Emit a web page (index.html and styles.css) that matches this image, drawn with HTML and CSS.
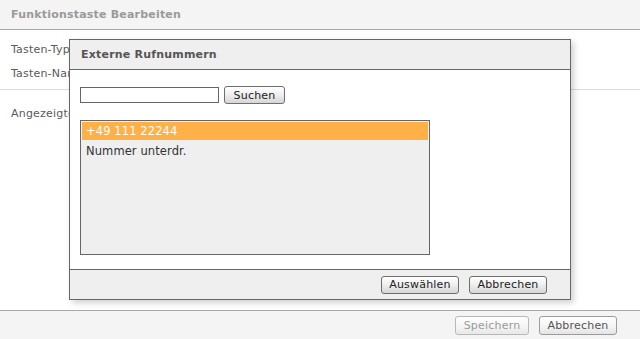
FILE: index.html
```html
<!DOCTYPE html>
<html lang="de">
<head>
<meta charset="utf-8">
<title>Funktionstaste Bearbeiten</title>
<link rel="stylesheet" href="styles.css">
</head>
<body>
<div class="page">
  <header class="page-head">Funktionstaste Bearbeiten</header>
  <main class="page-main">
    <section class="fields">
      <div class="row first">Tasten-Typ</div>
      <div class="row">Tasten-Name</div>
    </section>
    <section class="fields second">
      <div class="row">Angezeigter Name</div>
    </section>
  </main>
  <footer class="page-foot">
    <button class="btn btn-save" disabled>Speichern</button>
    <button class="btn btn-cancel">Abbrechen</button>
  </footer>
</div>

<div class="dialog">
  <div class="dlg-head">Externe Rufnummern</div>
  <div class="dlg-body">
    <div class="search">
      <input class="search-input" type="text">
      <button class="btn btn-search">Suchen</button>
    </div>
    <div class="listbox">
      <div class="opt selected">+49 111 22244</div>
      <div class="opt">Nummer unterdr.</div>
    </div>
  </div>
  <div class="dlg-foot">
    <button class="btn btn-w78">Auswählen</button>
    <button class="btn btn-w78">Abbrechen</button>
  </div>
</div>
</body>
</html>
```
FILE: styles.css
```css
html, body {
  margin: 0;
  padding: 0;
  height: 100%;
}
body {
  font-family: "DejaVu Sans", Verdana, sans-serif;
  font-size: 11px;
  letter-spacing: 0.2px;
  color: #5a5a5a;
  background: #fff;
  overflow: hidden;
}
.page {
  display: flex;
  flex-direction: column;
  height: 339px;
}
.page-head {
  height: 29px;
  line-height: 29px;
  background: #f4f4f4;
  border-bottom: 1px solid #a8a8a8;
  color: #9a9a9a;
  font-weight: bold;
  padding-left: 11px;
}
.page-main {
  flex: 1;
}
.fields {
  padding: 9px 11px 4px;
  border-bottom: 1px solid #dcdcdc;
}
.fields.second {
  border-bottom: none;
  padding-top: 13px;
}
.row {
  line-height: 22px;
  height: 22px;
  white-space: nowrap;
}
.row.first {
  height: 24px;
}
.page-foot {
  height: 28px;
  background: #f4f4f4;
  border-top: 1px solid #a8a8a8;
  display: flex;
  justify-content: flex-end;
  align-items: center;
  gap: 10px;
  padding-right: 23px;
}
.page-foot .btn {
  height: 19px;
}
.btn-save {
  width: 74px;
}
.btn-cancel {
  width: 78px;
}
.btn {
  font-family: "DejaVu Sans", Verdana, sans-serif;
  font-size: 11px;
  letter-spacing: 0.2px;
  color: #222;
  height: 18px;
  padding: 0 6px;
  border: 1px solid #6e6e6e;
  border-radius: 3px;
  background: linear-gradient(#ffffff, #f0f0f0 45%, #d6d6d6);
  box-sizing: border-box;
  line-height: 15px;
  margin: 0;
}
.page-foot .btn-cancel {
  color: #555;
  border-color: #9c9c9c;
  background: linear-gradient(#ffffff, #f6f6f6 50%, #e4e4e4);
}
.btn:disabled {
  color: #9a9a9a;
  border-color: #b8b8b8;
  background: linear-gradient(#ffffff, #f6f6f6 50%, #e8e8e8);
}
.btn-w78 {
  width: 78px;
}
.dialog {
  position: absolute;
  left: 69px;
  top: 39px;
  width: 502px;
  box-sizing: border-box;
  border: 1px solid #666;
  background: #fff;
  box-shadow: 3px 3px 6px rgba(0, 0, 0, 0.18);
}
.dlg-head {
  height: 29px;
  line-height: 29px;
  background: #efefef;
  border-bottom: 1px solid #666;
  padding-left: 11px;
  font-weight: bold;
  color: #555;
}
.dlg-body {
  height: 200px;
  box-sizing: border-box;
  padding: 15px 10px 0;
  border-bottom: 1px solid #666;
}
.search {
  display: flex;
  align-items: center;
  gap: 5px;
  height: 20px;
}
.search-input {
  width: 139px;
  height: 16px;
  box-sizing: border-box;
  border: 1px solid #666;
  padding: 0 2px;
  margin: 0;
  font-family: "DejaVu Sans", Verdana, sans-serif;
  font-size: 11px;
}
.btn-search {
  width: 61px;
}
.listbox {
  margin-top: 15px;
  width: 350px;
  height: 135px;
  box-sizing: border-box;
  border: 1px solid #666;
  background: #efefef;
  padding: 1px;
}
.opt {
  height: 18px;
  line-height: 18px;
  padding-left: 4px;
  color: #333;
  font-size: 11.5px;
  letter-spacing: 0.1px;
}
.opt.selected {
  background: #ffb047;
  color: #fff;
}
.opt + .opt {
  margin-top: 2px;
}
.dlg-foot {
  height: 29px;
  background: #efefef;
  display: flex;
  justify-content: flex-end;
  align-items: center;
  gap: 10px;
  padding-right: 23px;
}
```
